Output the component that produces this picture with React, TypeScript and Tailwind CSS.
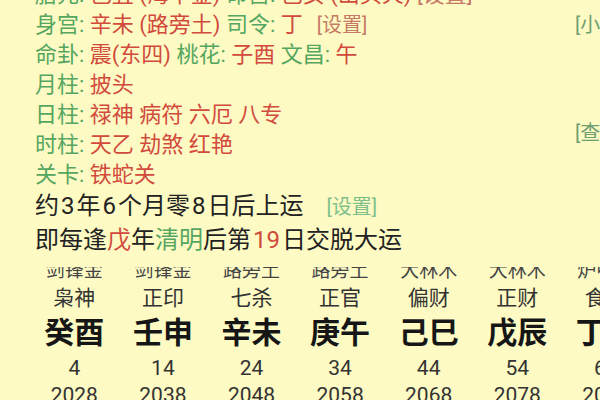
const FONT = "font-['Roboto','Noto_Sans_CJK_SC',sans-serif]";

const G = ({ children }: { children: React.ReactNode }) => <span className="text-[#55a660]">{children}</span>;
const R = ({ children }: { children: React.ReactNode }) => <span className="text-[#d24a3c]">{children}</span>;
const S = ({ children }: { children: React.ReactNode }) => <span className="text-[#c77a66]">{children}</span>;
const N = ({ children }: { children: React.ReactNode }) => <span className="mx-[2px]">{children}</span>;

const dayun = [
  { nayin: "剑锋金", shishen: "枭神", gz: "癸酉", age: 4, year: 2028 },
  { nayin: "剑锋金", shishen: "正印", gz: "壬申", age: 14, year: 2038 },
  { nayin: "路旁土", shishen: "七杀", gz: "辛未", age: 24, year: 2048 },
  { nayin: "路旁土", shishen: "正官", gz: "庚午", age: 34, year: 2058 },
  { nayin: "大林木", shishen: "偏财", gz: "己巳", age: 44, year: 2068 },
  { nayin: "大林木", shishen: "正财", gz: "戊辰", age: 54, year: 2078 },
  { nayin: "炉中火", shishen: "食神", gz: "丁卯", age: 64, year: 2088 },
];

export default function App() {
  return (
    <div className={`w-[600px] h-[400px] overflow-hidden bg-[#fdfac4] ${FONT}`}>
      <div className="flex -mt-[20px]">
        <div className="flex-1 pl-[35px] text-[22px] leading-[30px] whitespace-nowrap">
          <div>
            <G>胎元:</G> <R>己丑 (海中金)</R> <G>命宫:</G> <R>己亥 (山头火)</R> <S>[设置]</S>
          </div>
          <div>
            <G>身宫:</G> <R>辛未 (路旁土)</R> <G>司令:</G> <R>丁</R>
            <span className="ml-[14px] text-[20px] text-[#c77a66]">[设置]</span>
          </div>
          <div>
            <G>命卦:</G> <R>震(东四)</R> <G>桃花:</G> <R>子酉</R> <G>文昌:</G> <R>午</R>
          </div>
          <div>
            <G>月柱:</G> <R>披头</R>
          </div>
          <div>
            <G>日柱:</G> <R>禄神 病符 六厄 八专</R>
          </div>
          <div>
            <G>时柱:</G> <R>天乙 劫煞 红艳</R>
          </div>
          <div>
            <G>关卡:</G> <R>铁蛇关</R>
          </div>
        </div>
        <div className="w-[25px] shrink-0 whitespace-nowrap text-[20px] leading-[30px] text-[#6f9e72]">
          <div className="mt-[30px]">[小程序]</div>
          <div className="mt-[78px]">[查看]</div>
        </div>
      </div>

      <div className="pl-[35px] text-[24px] leading-[33px] text-[#222] whitespace-nowrap">
        <div>
          约<N>3</N>年<N>6</N>个月零<N>8</N>日后上运
          <span className="ml-[23px] text-[20px] text-[#7fc08a]">[设置]</span>
        </div>
        <div>
          即每逢<R>戊</R>年<G>清明</G>后第<R><N>19</N></R>日交脱大运
        </div>
      </div>

      <div className="grid grid-cols-[repeat(7,88.6px)] pl-[30px]">
        {dayun.map((d) => (
          <div key={d.gz} className="flex flex-col items-center whitespace-nowrap">
            <div className="h-[13px] mt-[10px] overflow-hidden">
              <div className="-mt-[5px] text-[19px] leading-[18px] text-[#444]">{d.nayin}</div>
            </div>
            <div className="text-[21px] leading-[36px] text-[#333]">{d.shishen}</div>
            <div className="text-[30px] leading-[34px] font-bold text-[#161616]">{d.gz}</div>
            <div className="text-[21px] leading-[36px] text-[#333]">{d.age}</div>
            <div className="text-[21px] leading-[18px] text-[#333]">{d.year}</div>
          </div>
        ))}
      </div>
    </div>
  );
}
